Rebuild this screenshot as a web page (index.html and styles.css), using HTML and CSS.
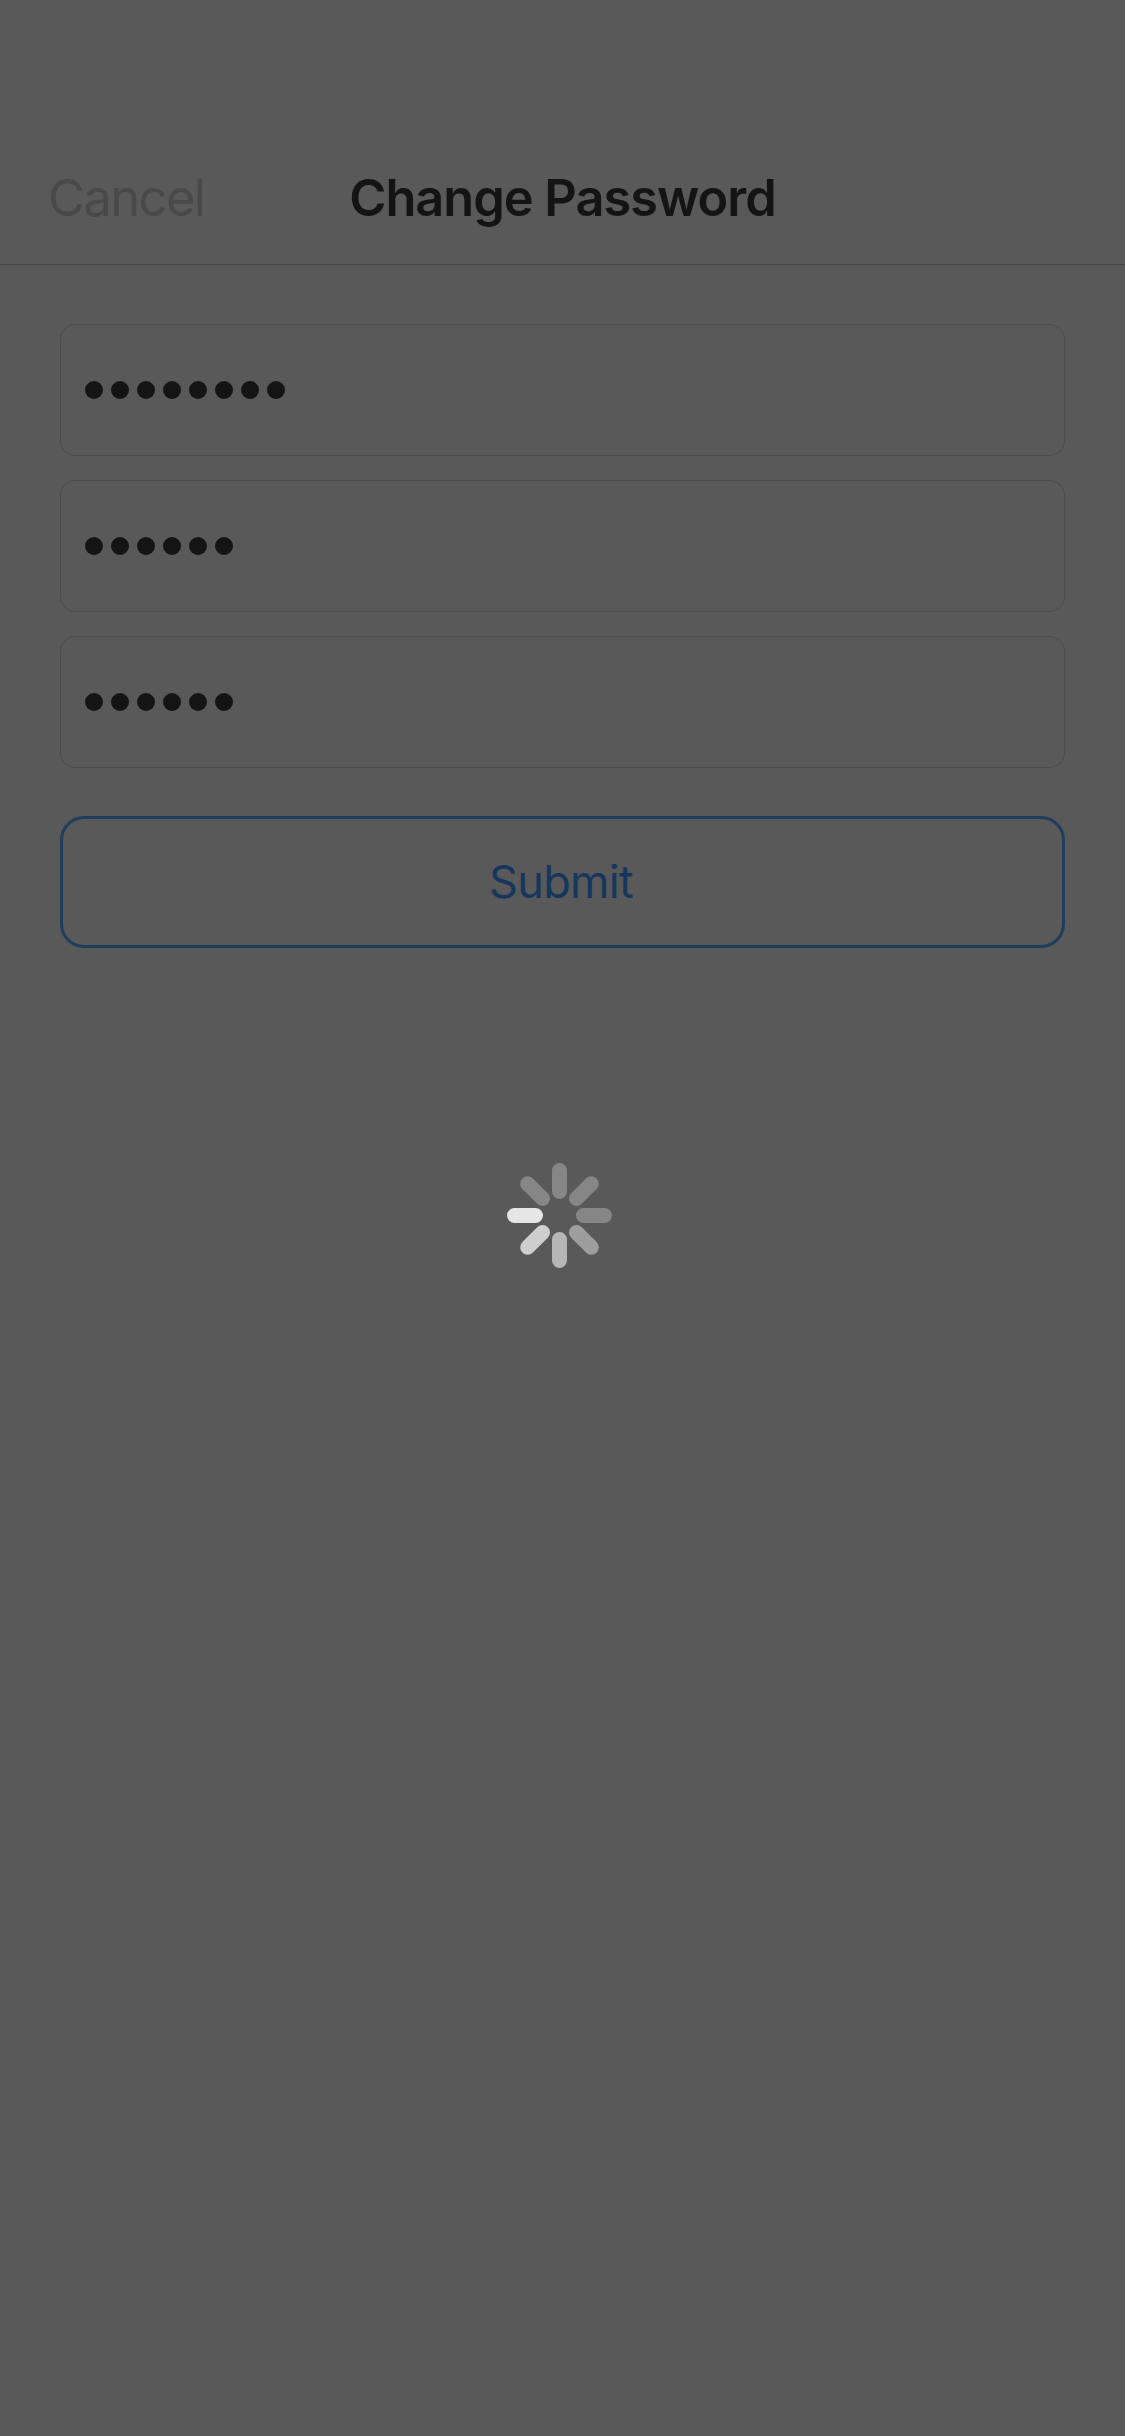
FILE: index.html
```html
<!DOCTYPE html>
<html lang="en">
<head>
<meta charset="utf-8">
<title>Change Password</title>
<link rel="stylesheet" href="styles.css">
</head>
<body>
<header class="navbar">
  <span class="cancel">Cancel</span>
  <h1 class="title">Change Password</h1>
</header>
<main class="form">
  <div class="field"><i class="dot"></i><i class="dot"></i><i class="dot"></i><i class="dot"></i><i class="dot"></i><i class="dot"></i><i class="dot"></i><i class="dot"></i></div>
  <div class="field"><i class="dot"></i><i class="dot"></i><i class="dot"></i><i class="dot"></i><i class="dot"></i><i class="dot"></i></div>
  <div class="field"><i class="dot"></i><i class="dot"></i><i class="dot"></i><i class="dot"></i><i class="dot"></i><i class="dot"></i></div>
  <button class="submit" type="button">Submit</button>
</main>
<svg class="spinner" viewBox="-52.5 -52.5 105 105" role="img" aria-label="Loading">
  <rect x="-7.5" y="-52.5" width="15" height="36" rx="7.5" fill="#868686"/>
  <rect x="-7.5" y="-52.5" width="15" height="36" rx="7.5" fill="#868686" transform="rotate(45)"/>
  <rect x="-7.5" y="-52.5" width="15" height="36" rx="7.5" fill="#868686" transform="rotate(90)"/>
  <rect x="-7.5" y="-52.5" width="15" height="36" rx="7.5" fill="#9e9e9e" transform="rotate(135)"/>
  <rect x="-7.5" y="-52.5" width="15" height="36" rx="7.5" fill="#b6b6b6" transform="rotate(180)"/>
  <rect x="-7.5" y="-52.5" width="15" height="36" rx="7.5" fill="#cecece" transform="rotate(225)"/>
  <rect x="-7.5" y="-52.5" width="15" height="36" rx="7.5" fill="#e6e6e6" transform="rotate(270)"/>
  <rect x="-7.5" y="-52.5" width="15" height="36" rx="7.5" fill="#868686" transform="rotate(315)"/>
</svg>
</body>
</html>
```
FILE: styles.css
```css
* { box-sizing: border-box; }
body {
  margin: 0;
  height: 2436px;
  background: #595959;
  font-family: Inter, "Liberation Sans", sans-serif;
  overflow: hidden;
}
.navbar {
  display: grid;
  grid-template-columns: 1fr auto 1fr;
  height: 265px;
  padding: 167px 48px 0;
  border-bottom: 1px solid #474747;
  line-height: 61px;
}
.cancel {
  color: #494949;
  font-size: 50.5px;
  letter-spacing: -1.5px;
}
.title {
  margin: 0;
  color: #141414;
  font-size: 50.5px;
  font-weight: 600;
  letter-spacing: -1px;
}
.form {
  display: flex;
  flex-direction: column;
  gap: 24px;
  padding: 59px 60px 0;
}
.field {
  display: flex;
  align-items: center;
  gap: 8px;
  height: 132px;
  padding: 0 24px;
  border: 1px solid #4c4c4c;
  border-radius: 15px;
}
.dot {
  width: 18px;
  height: 18px;
  border-radius: 50%;
  background: #141414;
}
.submit {
  height: 132px;
  margin-top: 24px;
  padding: 0 3px 0 0;
  border: 3px solid #213d5c;
  border-radius: 24px;
  background: none;
  color: #16365e;
  font: 400 45px/56px Inter, "Liberation Sans", sans-serif;
  letter-spacing: -0.7px;
}
.spinner {
  display: block;
  width: 105px;
  height: 105px;
  margin: 215px 0 0 507px;
}
```
